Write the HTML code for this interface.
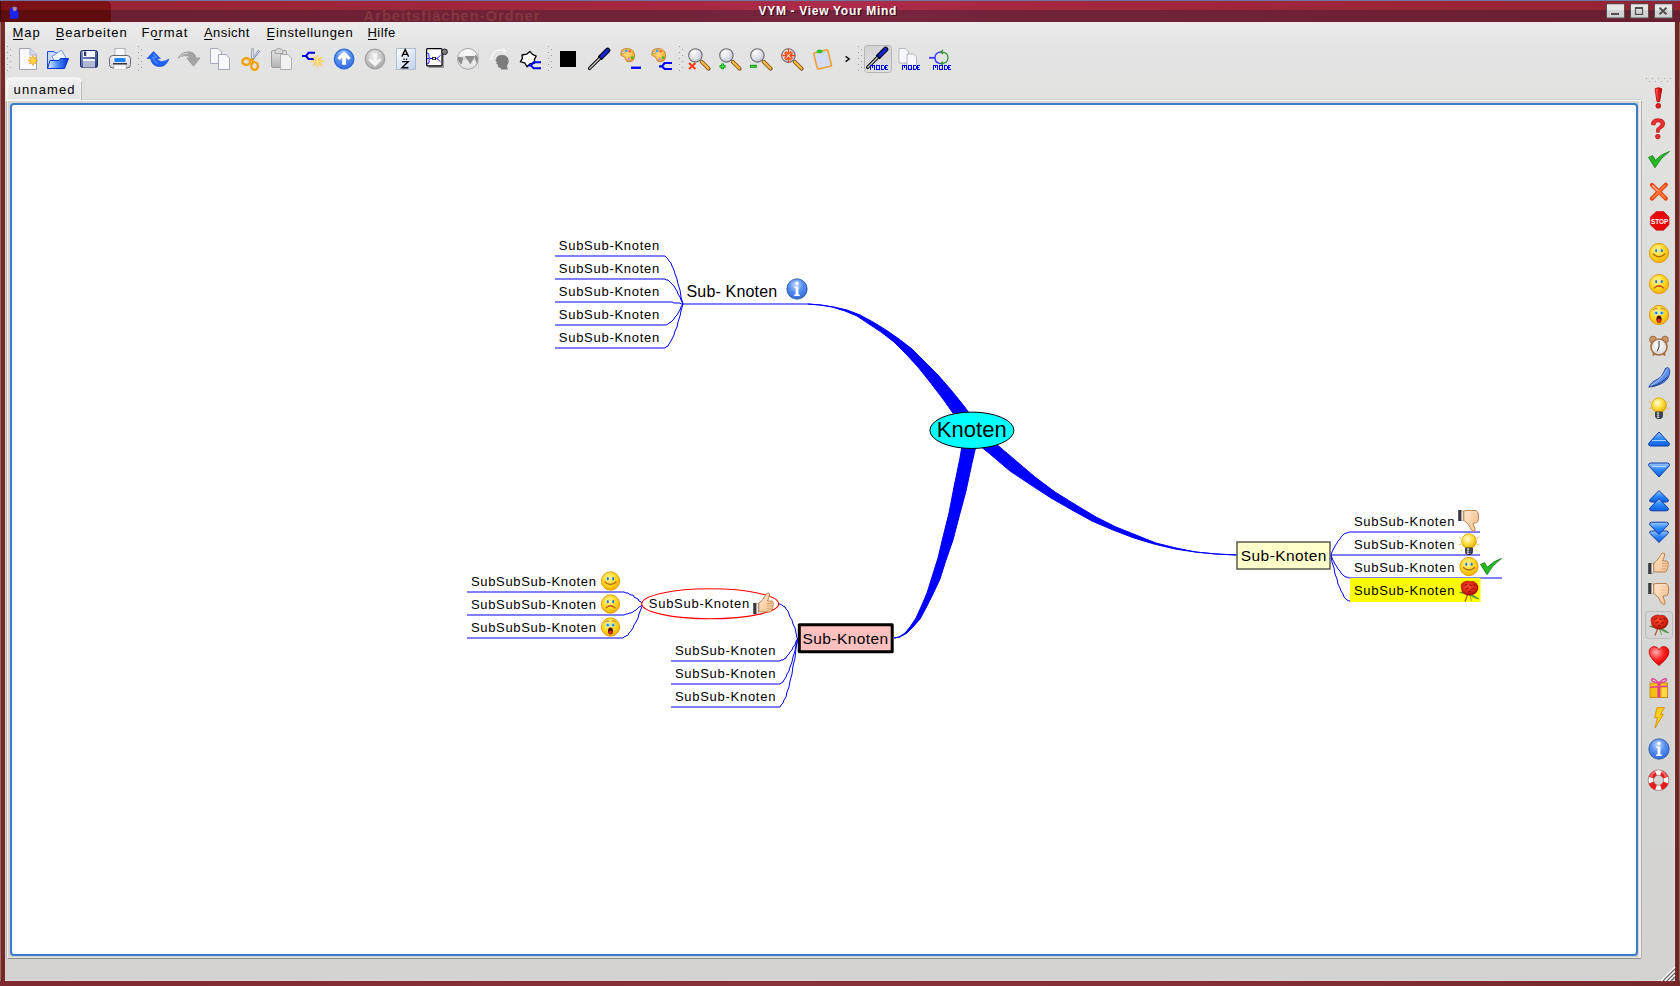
<!DOCTYPE html>
<html><head><meta charset="utf-8"><style>
html,body{margin:0;padding:0}
body{width:1680px;height:986px;overflow:hidden;background:#722828}
svg{position:absolute;left:0;top:0;font-family:"Liberation Sans",sans-serif}
text{font-family:"Liberation Sans",sans-serif;white-space:pre}
</style></head><body>
<svg width="1680" height="986" viewBox="0 0 1680 986">
<defs>
<linearGradient id="tbTop" x1="0" x2="1" y1="0" y2="0">
 <stop offset="0" stop-color="#952232"/><stop offset="0.4" stop-color="#a4283f"/><stop offset="0.5" stop-color="#ae2c4a"/><stop offset="0.6" stop-color="#a4283f"/><stop offset="1" stop-color="#952232"/>
</linearGradient>
<linearGradient id="tbBot" x1="0" x2="1" y1="0" y2="0">
 <stop offset="0" stop-color="#6a1f30"/><stop offset="0.4" stop-color="#722338"/><stop offset="0.5" stop-color="#7a2540"/><stop offset="0.6" stop-color="#722338"/><stop offset="1" stop-color="#6a1f30"/>
</linearGradient>
<linearGradient id="winbg" x1="0" x2="0" y1="0" y2="1">
 <stop offset="0" stop-color="#ececec"/><stop offset="0.025" stop-color="#e4e4e4"/><stop offset="0.08" stop-color="#e2e2e1"/><stop offset="0.3" stop-color="#dcdcdb"/><stop offset="0.7" stop-color="#d6d6d5"/><stop offset="1" stop-color="#d3d2d1"/>
</linearGradient>
<linearGradient id="tabg" x1="0" x2="0" y1="0" y2="1">
 <stop offset="0" stop-color="#f2f2f2"/><stop offset="1" stop-color="#e2e2e2"/>
</linearGradient>
<linearGradient id="btng" x1="0" x2="0" y1="0" y2="1">
 <stop offset="0" stop-color="#f0f0f0"/><stop offset="1" stop-color="#c8c8c8"/>
</linearGradient>
</defs>
<rect x="0" y="0" width="1680" height="986" fill="#722828"/>
<rect x="0" y="22" width="1" height="964" fill="#957068"/>
<rect x="1" y="22" width="4" height="959" fill="#782626"/>
<rect x="1675" y="22" width="4" height="959" fill="#722422"/>
<rect x="1679" y="22" width="1" height="964" fill="#886860"/>
<linearGradient id="botG" x1="0" x2="1" y1="0" y2="0"><stop offset="0" stop-color="#7e2a30"/><stop offset="0.45" stop-color="#8a323c"/><stop offset="0.7" stop-color="#86303a"/><stop offset="1" stop-color="#762828"/></linearGradient>
<rect x="0" y="981" width="1680" height="5" fill="url(#botG)"/>
<rect x="0" y="981" width="1680" height="1" fill="#80262e"/>
<rect x="5" y="980" width="1670" height="1" fill="#dcdedb"/>
<rect x="0" y="0" width="1680" height="1" fill="#6c78a4"/>
<rect x="0" y="1" width="1680" height="9" fill="url(#tbTop)"/>
<rect x="0" y="10" width="1680" height="12" fill="url(#tbBot)"/>
<path d="M0,1 H105 Q111,1 111,7 V22 H0 Z" fill="#5e0c0e"/>
<path d="M0,1 H105 Q111,1 111,7 V10 H0 Z" fill="#7c1216"/>
<rect x="0" y="1" width="1" height="21" fill="#2a0606" opacity="0.7"/>
<text x="363.6" y="21" font-size="14.5" letter-spacing="1.1" fill="#84363f" font-weight="bold" >Arbeitsflächen-Ordner</text>
<text x="758.5" y="15" font-size="12" letter-spacing="0.695" fill="#2a0008" font-weight="bold" transform="translate(1,1)" opacity="0.8">VYM - View Your Mind</text>
<text x="758.5" y="15" font-size="12" letter-spacing="0.695" fill="#ffffff" font-weight="bold" >VYM - View Your Mind</text>
<path d="M10,8.5 Q12,6.5 15,7 Q18,8 17.5,11 Q19,13 18.5,16 Q19,18.5 16.5,18.8 H11 Q9,18 10.5,15.5 Q8.5,13 10,11 Z" fill="#1a22ff"/><circle cx="14.8" cy="9" r="2" fill="#c09080"/><path d="M12,8 Q14,6 17,8" stroke="#8090c0" stroke-width="0.8" fill="none"/>
<rect x="1606.5" y="4" width="18" height="14" fill="#d2d2d2" stroke="#4e544e" stroke-width="1"/>
<rect x="1607" y="4.5" width="17" height="5.8" fill="#e6e6e6"/>
<rect x="1630.5" y="4" width="18" height="14" fill="#d2d2d2" stroke="#4e544e" stroke-width="1"/>
<rect x="1631" y="4.5" width="17" height="5.8" fill="#e6e6e6"/>
<rect x="1654.5" y="4" width="18" height="14" fill="#d2d2d2" stroke="#4e544e" stroke-width="1"/>
<rect x="1655" y="4.5" width="17" height="5.8" fill="#e6e6e6"/>
<rect x="1611" y="13" width="8" height="2" fill="#505050"/>
<rect x="1635.5" y="7.6" width="7" height="6.8" fill="none" stroke="#505050" stroke-width="1.2"/><rect x="1635" y="7" width="8" height="2" fill="#505050"/>
<path d="M1659.5,7.8 L1666.5,14.2 M1666.5,7.8 L1659.5,14.2" stroke="#505050" stroke-width="2"/>
<rect x="5" y="22" width="1670" height="958" fill="url(#winbg)"/><rect x="1674" y="22" width="1" height="958" fill="#dcdcdc"/>
<text x="12.5" y="37" font-size="13" letter-spacing="1.0" fill="#000" font-weight="normal" >Map</text>
<text x="55.7" y="37" font-size="13" letter-spacing="0.9" fill="#000" font-weight="normal" >Bearbeiten</text>
<text x="141.5" y="37" font-size="13" letter-spacing="0.92" fill="#000" font-weight="normal" >Format</text>
<text x="204.0" y="37" font-size="13" letter-spacing="0.45" fill="#000" font-weight="normal" >Ansicht</text>
<text x="266.59999999999997" y="37" font-size="13" letter-spacing="0.667" fill="#000" font-weight="normal" >Einstellungen</text>
<text x="367.5" y="37" font-size="13" letter-spacing="0.425" fill="#000" font-weight="normal" >Hilfe</text>
<rect x="13" y="39" width="10" height="1" fill="#000"/>
<rect x="56" y="39" width="8" height="1" fill="#000"/>
<rect x="154" y="39" width="6" height="1" fill="#000"/>
<rect x="204" y="39" width="8" height="1" fill="#000"/>
<rect x="267" y="39" width="7" height="1" fill="#000"/>
<rect x="368" y="39" width="9" height="1" fill="#000"/>
<rect x="7" y="46" width="1" height="1" fill="#9c9c9c"/>
<rect x="10" y="49" width="1" height="1" fill="#9c9c9c"/>
<rect x="7" y="52" width="1" height="1" fill="#9c9c9c"/>
<rect x="10" y="55" width="1" height="1" fill="#9c9c9c"/>
<rect x="7" y="58" width="1" height="1" fill="#9c9c9c"/>
<rect x="10" y="61" width="1" height="1" fill="#9c9c9c"/>
<rect x="7" y="64" width="1" height="1" fill="#9c9c9c"/>
<rect x="10" y="67" width="1" height="1" fill="#9c9c9c"/>
<rect x="7" y="70" width="1" height="1" fill="#9c9c9c"/>
<rect x="138" y="46" width="1" height="1" fill="#9c9c9c"/>
<rect x="141" y="49" width="1" height="1" fill="#9c9c9c"/>
<rect x="138" y="52" width="1" height="1" fill="#9c9c9c"/>
<rect x="141" y="55" width="1" height="1" fill="#9c9c9c"/>
<rect x="138" y="58" width="1" height="1" fill="#9c9c9c"/>
<rect x="141" y="61" width="1" height="1" fill="#9c9c9c"/>
<rect x="138" y="64" width="1" height="1" fill="#9c9c9c"/>
<rect x="141" y="67" width="1" height="1" fill="#9c9c9c"/>
<rect x="138" y="70" width="1" height="1" fill="#9c9c9c"/>
<rect x="548" y="46" width="1" height="1" fill="#9c9c9c"/>
<rect x="551" y="49" width="1" height="1" fill="#9c9c9c"/>
<rect x="548" y="52" width="1" height="1" fill="#9c9c9c"/>
<rect x="551" y="55" width="1" height="1" fill="#9c9c9c"/>
<rect x="548" y="58" width="1" height="1" fill="#9c9c9c"/>
<rect x="551" y="61" width="1" height="1" fill="#9c9c9c"/>
<rect x="548" y="64" width="1" height="1" fill="#9c9c9c"/>
<rect x="551" y="67" width="1" height="1" fill="#9c9c9c"/>
<rect x="548" y="70" width="1" height="1" fill="#9c9c9c"/>
<rect x="679" y="46" width="1" height="1" fill="#9c9c9c"/>
<rect x="682" y="49" width="1" height="1" fill="#9c9c9c"/>
<rect x="679" y="52" width="1" height="1" fill="#9c9c9c"/>
<rect x="682" y="55" width="1" height="1" fill="#9c9c9c"/>
<rect x="679" y="58" width="1" height="1" fill="#9c9c9c"/>
<rect x="682" y="61" width="1" height="1" fill="#9c9c9c"/>
<rect x="679" y="64" width="1" height="1" fill="#9c9c9c"/>
<rect x="682" y="67" width="1" height="1" fill="#9c9c9c"/>
<rect x="679" y="70" width="1" height="1" fill="#9c9c9c"/>
<rect x="858" y="46" width="1" height="1" fill="#9c9c9c"/>
<rect x="861" y="49" width="1" height="1" fill="#9c9c9c"/>
<rect x="858" y="52" width="1" height="1" fill="#9c9c9c"/>
<rect x="861" y="55" width="1" height="1" fill="#9c9c9c"/>
<rect x="858" y="58" width="1" height="1" fill="#9c9c9c"/>
<rect x="861" y="61" width="1" height="1" fill="#9c9c9c"/>
<rect x="858" y="64" width="1" height="1" fill="#9c9c9c"/>
<rect x="861" y="67" width="1" height="1" fill="#9c9c9c"/>
<rect x="858" y="70" width="1" height="1" fill="#9c9c9c"/>
<rect x="1646" y="78" width="1" height="1" fill="#a4a4a4"/>
<rect x="1649" y="81" width="1" height="1" fill="#a4a4a4"/>
<rect x="1652" y="78" width="1" height="1" fill="#a4a4a4"/>
<rect x="1655" y="81" width="1" height="1" fill="#a4a4a4"/>
<rect x="1658" y="78" width="1" height="1" fill="#a4a4a4"/>
<rect x="1661" y="81" width="1" height="1" fill="#a4a4a4"/>
<rect x="1664" y="78" width="1" height="1" fill="#a4a4a4"/>
<rect x="1667" y="81" width="1" height="1" fill="#a4a4a4"/>
<rect x="1670" y="78" width="1" height="1" fill="#a4a4a4"/>
<rect x="5" y="99" width="1636" height="1" fill="#cfcfcf"/>
<rect x="5" y="100" width="1636" height="1" fill="#fafafa"/>
<path d="M7,100 V82 Q7,78 11,78 H77 Q81,78 81,82 V100 Z" fill="url(#tabg)" stroke="#fcfcfc" stroke-width="1"/>
<path d="M81.5,82 V100" stroke="#b8b8b8" stroke-width="1"/>
<text x="13.6" y="94" font-size="13" letter-spacing="1.13" fill="#000" font-weight="normal" >unnamed</text>
<rect x="5" y="101" width="1" height="859" fill="#d0d4d4"/>
<rect x="6" y="101" width="1" height="858" fill="#b0b0b0"/>
<rect x="7" y="101" width="1" height="857" fill="#f2f2f0"/>
<rect x="8" y="101" width="1633" height="857" fill="#d8d4d0"/>
<rect x="8" y="957" width="1633" height="1" fill="#e2e0de"/>
<rect x="8" y="958" width="1633" height="1" fill="#8e8e8e"/>
<rect x="1639" y="101" width="2" height="857" fill="#eeeeec"/>
<rect x="1641" y="101" width="1" height="857" fill="#b0b0b0"/>
<rect x="11" y="104" width="1626" height="851" rx="3" fill="#ffffff" stroke="#3b7bcc" stroke-width="2"/>
<path d="M1661,981 L1675,967" stroke="#ffffff" stroke-width="1.2"/>
<path d="M1663,981 L1675,969" stroke="#6a6a6a" stroke-width="1.2"/>
<path d="M1665,981 L1675,971" stroke="#ffffff" stroke-width="1.2"/>
<path d="M1667,981 L1675,973" stroke="#6a6a6a" stroke-width="1.2"/>
<path d="M1669,981 L1675,975" stroke="#ffffff" stroke-width="1.2"/>
<path d="M1671,981 L1675,977" stroke="#6a6a6a" stroke-width="1.2"/>
<polygon fill="#0000ff" stroke="#0000ff" stroke-width="1" stroke-linejoin="round" points="808,304 820,305 832,307 845,311 857,316 869,324 881,332 894,342 906,354 918,367 930,382 943,399 955,416 967,436 977,424 964,406 951,390 938,375 925,362 912,349 899,339 886,330 873,322 860,315 847,310 834,307 821,305 808,304"/>
<polygon fill="#0000ff" stroke="#0000ff" stroke-width="1" stroke-linejoin="round" points="894,638 900,637 907,633 913,627 920,619 926,608 933,594 940,579 946,560 953,540 959,517 966,491 972,463 979,433 965,427 960,458 954,487 949,513 943,537 938,558 932,577 927,593 921,607 916,618 910,627 905,633 899,637 894,638"/>
<polygon fill="#0000ff" stroke="#0000ff" stroke-width="1" stroke-linejoin="round" points="1237,555 1216,554 1195,552 1175,549 1154,544 1134,538 1113,530 1092,521 1072,510 1051,498 1031,485 1010,471 990,454 969,437 975,423 995,443 1015,460 1035,477 1055,492 1076,505 1096,517 1116,527 1136,535 1156,543 1176,548 1196,552 1216,554 1237,555"/>
<line x1="555" y1="256" x2="663" y2="256" stroke="#0000ff" stroke-width="1"/>
<polyline fill="none" stroke="#0000ff" stroke-width="1.0" points="663,256 665,256 666,257 668,259 669,261 671,263 672,266 674,270 675,274 677,279 678,284 680,290 681,297 683,304"/>
<line x1="555" y1="279" x2="663" y2="279" stroke="#0000ff" stroke-width="1"/>
<polyline fill="none" stroke="#0000ff" stroke-width="1.0" points="663,279 665,279 666,280 668,280 669,281 671,283 672,284 674,286 675,288 677,291 678,294 680,297 681,300 683,304"/>
<line x1="555" y1="302" x2="663" y2="302" stroke="#0000ff" stroke-width="1"/>
<polyline fill="none" stroke="#0000ff" stroke-width="1.0" points="663,302 665,302 666,302 668,302 669,302 671,302 672,302 674,303 675,303 677,303 678,303 680,303 681,304 683,304"/>
<line x1="555" y1="325" x2="663" y2="325" stroke="#0000ff" stroke-width="1"/>
<polyline fill="none" stroke="#0000ff" stroke-width="1.0" points="663,325 665,325 666,325 668,324 669,323 671,322 672,321 674,319 675,317 677,315 678,313 680,310 681,307 683,304"/>
<line x1="555" y1="348" x2="663" y2="348" stroke="#0000ff" stroke-width="1"/>
<polyline fill="none" stroke="#0000ff" stroke-width="1.0" points="663,348 665,348 666,347 668,346 669,344 671,341 672,339 674,335 675,331 677,327 678,322 680,316 681,311 683,304"/>
<line x1="683" y1="304" x2="808" y2="304" stroke="#0000ff" stroke-width="1"/>
<line x1="671" y1="661" x2="778" y2="661" stroke="#0000ff" stroke-width="1"/>
<polyline fill="none" stroke="#0000ff" stroke-width="1.0" points="778,661 780,661 781,660 783,660 784,659 786,658 787,656 789,654 790,652 792,650 793,647 795,645 796,641 798,638"/>
<line x1="671" y1="684" x2="778" y2="684" stroke="#0000ff" stroke-width="1"/>
<polyline fill="none" stroke="#0000ff" stroke-width="1.0" points="778,684 780,684 781,683 783,682 784,680 786,677 787,674 789,671 790,667 792,662 793,657 795,651 796,645 798,638"/>
<line x1="671" y1="707" x2="778" y2="707" stroke="#0000ff" stroke-width="1"/>
<polyline fill="none" stroke="#0000ff" stroke-width="1.0" points="778,707 780,707 781,705 783,703 784,700 786,697 787,692 789,687 790,681 792,674 793,666 795,658 796,648 798,638"/>
<polyline fill="none" stroke="#0000ff" stroke-width="1.0" points="779,604 780,604 782,605 783,606 785,607 786,609 788,611 789,614 790,617 792,620 793,624 795,628 796,633 797,638"/>
<line x1="467" y1="592" x2="621" y2="592" stroke="#0000ff" stroke-width="1"/>
<polyline fill="none" stroke="#0000ff" stroke-width="1.0" points="621,592 623,592 624,592 626,593 628,593 629,594 631,595 633,595 634,597 636,598 638,599 639,601 641,602 643,604"/>
<line x1="467" y1="615" x2="621" y2="615" stroke="#0000ff" stroke-width="1"/>
<polyline fill="none" stroke="#0000ff" stroke-width="1.0" points="621,615 623,615 624,615 626,614 628,614 629,613 631,613 633,612 634,611 636,610 638,608 639,607 641,606 643,604"/>
<line x1="467" y1="638" x2="621" y2="638" stroke="#0000ff" stroke-width="1"/>
<polyline fill="none" stroke="#0000ff" stroke-width="1.0" points="621,638 623,638 624,637 626,636 628,635 629,633 631,631 633,628 634,625 636,622 638,618 639,614 641,609 643,604"/>
<polyline fill="none" stroke="#0000ff" stroke-width="1.0" points="1350,532 1349,532 1347,533 1346,533 1344,534 1343,535 1341,537 1340,539 1338,541 1337,543 1335,546 1334,548 1332,552 1331,555"/>
<polyline fill="none" stroke="#0000ff" stroke-width="1.0" points="1350,555 1349,555 1347,555 1346,555 1344,555 1343,555 1341,555 1340,555 1338,555 1337,555 1335,555 1334,555 1332,555 1331,555"/>
<polyline fill="none" stroke="#0000ff" stroke-width="1.0" points="1350,578 1349,578 1347,577 1346,577 1344,576 1343,575 1341,573 1340,571 1338,569 1337,567 1335,564 1334,562 1332,558 1331,555"/>
<polyline fill="none" stroke="#0000ff" stroke-width="1.0" points="1350,601 1349,601 1347,600 1346,599 1344,597 1343,594 1341,591 1340,588 1338,584 1337,579 1335,574 1334,568 1332,562 1331,555"/>
<line x1="1350" y1="532" x2="1480" y2="532" stroke="#0000ff" stroke-width="1"/>
<line x1="1350" y1="555" x2="1480" y2="555" stroke="#0000ff" stroke-width="1"/>
<line x1="1350" y1="578" x2="1502" y2="578" stroke="#0000ff" stroke-width="1"/>
<rect x="1350" y="578" width="130.5" height="24" fill="#ffff00"/>
<ellipse cx="971.9" cy="430.3" rx="42" ry="18.2" fill="#00ffff" stroke="#000" stroke-width="1"/>
<text x="936.8" y="437" font-size="22" letter-spacing="0.06" fill="#000" font-weight="normal" >Knoten</text>
<text x="686.5" y="297" font-size="16" letter-spacing="0.175" fill="#000" font-weight="normal" >Sub- Knoten</text>
<text x="558.8" y="250" font-size="13" letter-spacing="0.725" fill="#000" font-weight="normal" >SubSub-Knoten</text>
<text x="558.8" y="273" font-size="13" letter-spacing="0.725" fill="#000" font-weight="normal" >SubSub-Knoten</text>
<text x="558.8" y="296" font-size="13" letter-spacing="0.725" fill="#000" font-weight="normal" >SubSub-Knoten</text>
<text x="558.8" y="319" font-size="13" letter-spacing="0.725" fill="#000" font-weight="normal" >SubSub-Knoten</text>
<text x="558.8" y="342" font-size="13" letter-spacing="0.725" fill="#000" font-weight="normal" >SubSub-Knoten</text>
<rect x="799.3" y="624.8" width="92.9" height="27" fill="#ffc0c0" stroke="#000" stroke-width="3" stroke-linejoin="round"/>
<text x="802.5" y="644" font-size="15.5" letter-spacing="0.42" fill="#000" font-weight="normal" >Sub-Knoten</text>
<ellipse cx="710.2" cy="603.8" rx="68.5" ry="15" fill="#fff" stroke="#ff0000" stroke-width="1.1"/>
<text x="648.8" y="608" font-size="13" letter-spacing="0.725" fill="#000" font-weight="normal" >SubSub-Knoten</text>
<text x="470.9" y="586" font-size="13" letter-spacing="0.68" fill="#000" font-weight="normal" >SubSubSub-Knoten</text>
<text x="470.9" y="609" font-size="13" letter-spacing="0.68" fill="#000" font-weight="normal" >SubSubSub-Knoten</text>
<text x="470.9" y="632" font-size="13" letter-spacing="0.68" fill="#000" font-weight="normal" >SubSubSub-Knoten</text>
<text x="674.9" y="655" font-size="13" letter-spacing="0.725" fill="#000" font-weight="normal" >SubSub-Knoten</text>
<text x="674.9" y="678" font-size="13" letter-spacing="0.725" fill="#000" font-weight="normal" >SubSub-Knoten</text>
<text x="674.9" y="701" font-size="13" letter-spacing="0.725" fill="#000" font-weight="normal" >SubSub-Knoten</text>
<rect x="1237" y="542" width="93" height="27" fill="#ffffcc" stroke="#5a5a50" stroke-width="1.5"/>
<text x="1240.8" y="561" font-size="15.5" letter-spacing="0.42" fill="#000" font-weight="normal" >Sub-Knoten</text>
<text x="1353.9" y="526" font-size="13" letter-spacing="0.725" fill="#000" font-weight="normal" >SubSub-Knoten</text>
<text x="1353.9" y="549" font-size="13" letter-spacing="0.725" fill="#000" font-weight="normal" >SubSub-Knoten</text>
<text x="1353.9" y="572" font-size="13" letter-spacing="0.725" fill="#000" font-weight="normal" >SubSub-Knoten</text>
<text x="1353.9" y="595" font-size="13" letter-spacing="0.725" fill="#000" font-weight="normal" >SubSub-Knoten</text>
<defs>
<linearGradient id="openG" x1="0" x2="1" y1="0" y2="0"><stop offset="0" stop-color="#e8f0ff"/><stop offset="0.5" stop-color="#4a8af8"/><stop offset="1" stop-color="#0030d8"/></linearGradient>
<linearGradient id="pasteG" x1="0" x2="0" y1="0" y2="1"><stop offset="0" stop-color="#e4e4e4"/><stop offset="1" stop-color="#b4b4b4"/></linearGradient>
<radialGradient id="blueBall" cx="0.45" cy="0.3" r="0.75"><stop offset="0" stop-color="#c8dcff"/><stop offset="0.45" stop-color="#5a90f0"/><stop offset="1" stop-color="#2a66d8"/></radialGradient>
<radialGradient id="grayBall" cx="0.45" cy="0.3" r="0.75"><stop offset="0" stop-color="#f4f4f4"/><stop offset="0.5" stop-color="#c4c4c4"/><stop offset="1" stop-color="#a4a4a4"/></radialGradient>
<linearGradient id="azG" x1="0" x2="1" y1="0" y2="1"><stop offset="0" stop-color="#ffffff"/><stop offset="1" stop-color="#c0d0ec"/></linearGradient>
<linearGradient id="globeG" x1="0" x2="0" y1="0" y2="1"><stop offset="0" stop-color="#fafafa"/><stop offset="0.35" stop-color="#f4f4f4"/><stop offset="0.45" stop-color="#c8c8c8"/><stop offset="0.6" stop-color="#ececec"/><stop offset="1" stop-color="#e0e0e0"/></linearGradient>
<radialGradient id="palG" cx="0.45" cy="0.4" r="0.7"><stop offset="0" stop-color="#ffe080"/><stop offset="0.6" stop-color="#f8b840"/><stop offset="1" stop-color="#d88820"/></radialGradient>
<radialGradient id="lensG" cx="0.35" cy="0.3" r="0.8"><stop offset="0" stop-color="#ffffff"/><stop offset="0.6" stop-color="#dcdce4"/><stop offset="1" stop-color="#b4b8c8"/></radialGradient>
<linearGradient id="printG" x1="0" x2="0" y1="0" y2="1"><stop offset="0" stop-color="#f8f8fa"/><stop offset="1" stop-color="#d0d0d6"/></linearGradient>
<linearGradient id="saveG" x1="0" x2="1" y1="0" y2="1"><stop offset="0" stop-color="#8a9ad0"/><stop offset="1" stop-color="#2a3878"/></linearGradient>
<linearGradient id="btnP" x1="0" x2="0" y1="0" y2="1"><stop offset="0" stop-color="#d4d4d4"/><stop offset="1" stop-color="#e0e0e0"/></linearGradient>
</defs>
<g transform="translate(16,48)"><path d="M3.5,0.5 H14 L20.5,7 V21.5 H3.5 Z" fill="#fafaff" stroke="#9ea2b4"/><path d="M14,0.5 V7 H20.5" fill="#d8dcf4" stroke="#9ea2b4" stroke-width="0.8"/><polygon points="17.00,7.50 17.99,10.10 20.54,8.96 19.40,11.51 22.00,12.50 19.40,13.49 20.54,16.04 17.99,14.90 17.00,17.50 16.01,14.90 13.46,16.04 14.60,13.49 12.00,12.50 14.60,11.51 13.46,8.96 16.01,10.10" fill="#ffd840" stroke="#f0a030" stroke-width="0.8" stroke-linejoin="round"/></g>
<g transform="translate(47,48)"><path d="M0.5,3.5 H7 L8.5,5 H12 V20.5 H0.5 Z" fill="#c8d8fa" stroke="#1a4ee0"/><path d="M5,8.5 L14.5,2 L19,10 L9,15.5 Z" fill="#f4f6ff" stroke="#5a80e0" stroke-width="0.8"/><path d="M3,12.5 H12 L13.5,10.5 H21.5 L17.5,20.5 H0.5 Z" fill="url(#openG)" stroke="#0030d8"/></g>
<g transform="translate(78,48)"><rect x="2.5" y="2.5" width="17" height="17" rx="2" fill="url(#saveG)" stroke="#1a2468"/><rect x="5" y="3" width="12" height="6" fill="#f4f4fc"/><rect x="6" y="3.5" width="2.2" height="4.5" fill="#2a3878"/><rect x="5" y="11" width="12" height="8.5" fill="#b0b8d4"/><rect x="5" y="11" width="12" height="2" fill="#eceef8"/></g>
<g transform="translate(109,48)"><rect x="6" y="0.5" width="10" height="10" fill="#f8f8ff" stroke="#a8a8b0" stroke-width="0.8"/><rect x="0.5" y="7.5" width="21" height="12.5" rx="3.5" fill="url(#printG)" stroke="#6a6a72"/><rect x="5.5" y="10" width="11" height="4" fill="#1e84f4"/><rect x="4" y="15" width="14" height="1.6" fill="#3a3a44"/><rect x="5" y="17" width="12" height="4.5" fill="#fbfbfb" stroke="#b8b8b8" stroke-width="0.5"/></g>
<g transform="translate(147,48)"><path d="M6.5,3.5 L13.5,10.5 H10.2 Q12.5,16 22,11.2 Q18.5,19.5 11,18.5 Q4.8,17.5 3.6,10.5 H0 Z" fill="#1e62f6" stroke="#0a44d8" stroke-width="0.6" stroke-linejoin="round"/><path d="M6.5,6 L9.5,9.4 H6 Q7,13.5 10.5,15.5" fill="none" stroke="#6a9aff" stroke-width="1.4" opacity="0.7"/></g>
<g transform="translate(178,48)"><path d="M0,10.2 Q3.5,3.8 11,3.8 Q16.5,4 18.2,10 H22 L15.5,18.2 L8.8,10 H12.6 Q10.5,7.2 6.5,7.6 Q2.8,8 0,10.2 Z" fill="#a4a4a4" stroke="#8a8a8a" stroke-width="0.6" stroke-linejoin="round"/><path d="M2,8.5 Q5,5 10,5" fill="none" stroke="#e8e8e8" stroke-width="0.8"/></g>
<g transform="translate(209,48)"><path d="M1.5,0.5 H9 L12.5,4 V15.5 H1.5 Z" fill="#f8f8fc" stroke="#a4a8bc"/><path d="M9.5,6.5 H17 L20.5,10 V21.5 H9.5 Z" fill="#f8f8fc" stroke="#a4a8bc"/></g>
<g transform="translate(240,48)"><path d="M12.6,0.5 L12.2,11.5 M19.2,2.6 L12.2,11.5" stroke="#7880a4" stroke-width="2.2"/><path d="M12.7,1.2 L12.4,10.2 M18.6,3.2 L12.8,10.3" stroke="#ffffff" stroke-width="0.8"/><ellipse cx="6.3" cy="13.6" rx="3.9" ry="3.3" fill="none" stroke="#f0a000" stroke-width="2.4"/><ellipse cx="14.6" cy="18" rx="3.3" ry="3.9" fill="none" stroke="#f0a000" stroke-width="2.4"/><path d="M9.6,12.4 L12.3,11.6 L13.2,14.4" fill="none" stroke="#f0a000" stroke-width="2"/></g>
<g transform="translate(271,48)"><rect x="0.5" y="2.5" width="15" height="17" rx="1.5" fill="url(#pasteG)" stroke="#9c9c9c"/><path d="M4,5.5 Q4,0.5 8,0.5 Q12,0.5 12,5.5 Z" fill="#dadada" stroke="#a0a0a0"/><path d="M9.5,6.5 H17 L20.5,10 V21.5 H9.5 Z" fill="#f2f2f2" stroke="#b0b0b0"/></g>
<g transform="translate(302,48)"><path d="M0,8 H4 L6.6,4.8 H13 M4,8 L6.6,11 H12" fill="none" stroke="#0000e0" stroke-width="2"/><path d="M21.50,13.40 L9.50,13.40" stroke="#f8c040" stroke-width="1.8"/><path d="M19.74,17.64 L11.26,9.16" stroke="#f8c040" stroke-width="1.8"/><path d="M15.50,19.40 L15.50,7.40" stroke="#f8c040" stroke-width="1.8"/><path d="M11.26,17.64 L19.74,9.16" stroke="#f8c040" stroke-width="1.8"/><path d="M21.00,13.40 L10.00,13.40" stroke="#fff0a0" stroke-width="0.7"/><path d="M19.39,17.29 L11.61,9.51" stroke="#fff0a0" stroke-width="0.7"/><path d="M15.50,18.90 L15.50,7.90" stroke="#fff0a0" stroke-width="0.7"/><path d="M11.61,17.29 L19.39,9.51" stroke="#fff0a0" stroke-width="0.7"/></g>
<g transform="translate(333,48)"><circle cx="11.1" cy="11" r="9.8" fill="url(#blueBall)" stroke="#2a68d8" stroke-width="1.2"/><path d="M11.1,3.2 L17.8,10 L15.6,12 L13,9.6 V16.8 H9.2 V9.6 L6.6,12 L4.4,10 Z" fill="#ffffff"/></g>
<g transform="translate(364,48)"><circle cx="11" cy="11" r="9.8" fill="url(#grayBall)" stroke="#a0a0a0" stroke-width="1.2"/><path d="M11,18.8 L17.7,12 L15.5,10 L12.9,12.4 V5.2 H9.1 V12.4 L6.5,10 L4.3,12 Z" fill="#f4f4f4"/></g>
<g transform="translate(395,48)"><rect x="1.5" y="0.5" width="19" height="21" fill="url(#azG)" stroke="#b0bcd0"/><path d="M6.8,8.6 L10.2,1.6 L13.6,8.6 M8,6.4 H12.4" fill="none" stroke="#000" stroke-width="1.3"/><rect x="8.3" y="10.6" width="1.3" height="1.3" fill="#000"/><rect x="10.9" y="10.6" width="1.3" height="1.3" fill="#000"/><path d="M7,13.6 H13.2 L7,19.8 H13.4" fill="none" stroke="#000" stroke-width="1.4"/></g>
<g transform="translate(426,48)"><rect x="2.4" y="2.4" width="15.6" height="17.6" fill="#9a9a9a"/><rect x="0.6" y="0.6" width="15.4" height="17.2" rx="1" fill="#fff" stroke="#000" stroke-width="1.2"/><circle cx="18.6" cy="3.8" r="2.8" fill="#808080" stroke="#000" stroke-width="0.8"/><path d="M1,5 Q3,5 3,7 V8.8 Q3,10.5 5,10.5 M1,16 Q3,16 3,14 V12.2 Q3,10.5 5,10.5 H6.4 M9.6,10.5 H11 L14.6,7.2 M11,10.5 L14.6,13.8 M1,10.5 H3" fill="none" stroke="#0000ff" stroke-width="0.9"/><rect x="6.4" y="9.5" width="3.2" height="2" fill="#fff" stroke="#000" stroke-width="0.8"/></g>
<g transform="translate(457,48)"><clipPath id="globeClip"><circle cx="10.9" cy="10.9" r="10.4"/></clipPath><circle cx="10.9" cy="10.9" r="10.4" fill="url(#globeG)"/><g clip-path="url(#globeClip)"><path d="M0.8,9.4 Q3.5,8.2 6.2,10 L4.6,16.6 Q1,14 0.8,9.4 Z" fill="#8c8c8c"/><path d="M7.8,8 H18.2 L13.4,16.2 Z" fill="#8e8e8e"/><path d="M17.8,6.4 Q21.4,8 21.3,12 L20,16 L18.4,12 Z" fill="#8c8c8c"/></g><circle cx="10.9" cy="10.9" r="10.4" fill="none" stroke="#a4a4a4" stroke-width="1"/><rect x="21.2" y="0.4" width="0.7" height="21" fill="#cacaca"/></g>
<g transform="translate(488,48)"><path d="M8.6,9.2 Q10,7 14,7 Q19.6,7 20.6,12 Q21,15.5 19,17.5 L19.8,21.4 H13 L12.6,19.8 Q10.5,20 10,18.5 L9.8,16.6 L8.2,16 L9,14.6 L7.4,12.6 Q8.6,11 8.6,9.2 Z" fill="#7c7c7c"/><path d="M3.2,11.6 Q4,3 11,1.8 Q15,1.2 16.6,2.6" fill="none" stroke="#f6f6f6" stroke-width="1.8"/><path d="M15,0.6 L17.6,2.7 L15.4,5" fill="none" stroke="#f6f6f6" stroke-width="1.4"/></g>
<g transform="translate(519,48)"><path d="M3,7 L7.6,6.2 L10.8,3.4 L13.8,6.6 L17.2,8 L15.4,11.6 L15.6,15.2 L11.2,15.6 L8,18.8 L6,15.2 L1.4,13.6 L3.4,10.6 Z" fill="#fff" stroke="#000" stroke-width="1.3" stroke-linejoin="round"/><path d="M9.5,17.6 H12 L14.6,14.3 H22 M12,17.6 L14.6,20.2 H22" fill="none" stroke="#0000ff" stroke-width="2"/></g>
<rect x="560" y="51" width="16" height="16" fill="#000"/>
<g transform="translate(588,48)"><path d="M1.6,20.4 L13,9" stroke="#000" stroke-width="3.4" stroke-linecap="round"/><path d="M1.8,20.2 L13,9" stroke="#c4c4c4" stroke-width="1.5" stroke-linecap="round"/><path d="M10.6,7.6 L14.4,11.4" stroke="#000" stroke-width="2.2"/><path d="M13.6,8.4 L19.6,2.4" stroke="#000" stroke-width="5.4" stroke-linecap="round"/><path d="M13.6,8.4 L19.6,2.4" stroke="#1424c8" stroke-width="3.6" stroke-linecap="round"/></g>
<g transform="translate(619,48)"><path d="M2,5 Q2,0.5 8,0.5 Q15,0.5 15.6,7 Q16,13.6 10,13.8 Q7,14 6,10.2 Q5.2,8 3,8 Q1,8 2,5 Z" fill="url(#palG)" stroke="#c07020" stroke-width="0.7"/><ellipse cx="4" cy="4.6" rx="1.3" ry="1" fill="#fff" stroke="#906030" stroke-width="0.5"/><circle cx="7.2" cy="2.8" r="1.4" fill="#3aa0ff"/><circle cx="10.6" cy="3.2" r="1.2" fill="#ff5a50"/><circle cx="13.2" cy="9.6" r="1.4" fill="#30c030"/><circle cx="9.6" cy="11.2" r="1.2" fill="#b898ff"/><rect x="12" y="18.6" width="10" height="2.3" fill="#0000ff"/></g>
<g transform="translate(650,48)"><path d="M2,5 Q2,0.5 8,0.5 Q15,0.5 15.6,7 Q16,13.6 10,13.8 Q7,14 6,10.2 Q5.2,8 3,8 Q1,8 2,5 Z" fill="url(#palG)" stroke="#c07020" stroke-width="0.7"/><ellipse cx="4" cy="4.6" rx="1.3" ry="1" fill="#fff" stroke="#906030" stroke-width="0.5"/><circle cx="7.2" cy="2.8" r="1.4" fill="#3aa0ff"/><circle cx="10.6" cy="3.2" r="1.2" fill="#ff5a50"/><circle cx="13.2" cy="9.6" r="1.4" fill="#30c030"/><circle cx="9.6" cy="11.2" r="1.2" fill="#b898ff"/><path d="M9,18.4 H12 L14.6,15 H22 M12,18.4 L14.6,21 H22" stroke="#0000ff" stroke-width="2.2" fill="none"/></g>
<g transform="translate(688,48)"><circle cx="7.4" cy="7.4" r="6.7" fill="url(#lensG)" stroke="#6c6c74" stroke-width="1.1"/><path d="M13.8,13.8 L20.6,20.6" stroke="#7a4a10" stroke-width="4" stroke-linecap="round"/><path d="M13.8,13.8 L20.4,20.4" stroke="#f4b848" stroke-width="2.4" stroke-linecap="round"/><path d="M1,15 L7.4,21 M7.4,15 L1,21" stroke="#ff3a10" stroke-width="2"/></g>
<g transform="translate(719,48)"><circle cx="7.4" cy="7.4" r="6.7" fill="url(#lensG)" stroke="#6c6c74" stroke-width="1.1"/><path d="M13.8,13.8 L20.6,20.6" stroke="#7a4a10" stroke-width="4" stroke-linecap="round"/><path d="M13.8,13.8 L20.4,20.4" stroke="#f4b848" stroke-width="2.4" stroke-linecap="round"/><path d="M3.6,15.4 V21.2 M0.6,18.3 H6.6" stroke="#0a9a0a" stroke-width="2.8"/><path d="M3.6,16 V20.6 M1.2,18.3 H6" stroke="#50e050" stroke-width="1"/></g>
<g transform="translate(750,48)"><circle cx="7.4" cy="7.4" r="6.7" fill="url(#lensG)" stroke="#6c6c74" stroke-width="1.1"/><path d="M13.8,13.8 L20.6,20.6" stroke="#7a4a10" stroke-width="4" stroke-linecap="round"/><path d="M13.8,13.8 L20.4,20.4" stroke="#f4b848" stroke-width="2.4" stroke-linecap="round"/><rect x="0" y="16.8" width="6.8" height="3" fill="#0a9a0a"/><rect x="1" y="17.8" width="4.8" height="1" fill="#50e050"/></g>
<g transform="translate(781,48)"><circle cx="7.4" cy="7.6" r="6.8" fill="url(#lensG)" stroke="#6c6c74" stroke-width="1.1"/><path d="M13.8,13.8 L20.6,20.6" stroke="#7a4a10" stroke-width="4" stroke-linecap="round"/><path d="M13.8,13.8 L20.4,20.4" stroke="#f4b848" stroke-width="2.4" stroke-linecap="round"/><path d="M0.5,7.6 L6,7.6 M3.5,4.5 L6,7.6 L3.5,10.7 M14.5,7.6 L9,7.6 M11.5,4.5 L9,7.6 L11.5,10.7 M7.4,0.5 V6 M4.5,3.5 L7.4,6 L10.3,3.5 M7.4,15 V9.5 M4.5,12 L7.4,9.5 L10.3,12" fill="none" stroke="#ff4a10" stroke-width="1.5"/></g>
<g transform="translate(812,48)"><g transform="rotate(-14 11 11)"><rect x="3.2" y="3" width="14.6" height="16.8" rx="1.6" fill="#d4dcf8" stroke="#f0a030" stroke-width="1.6"/></g><ellipse cx="7.6" cy="3.4" rx="3" ry="1.8" fill="#30c030"/></g>
<path d="M845.6,56.4 L849.2,59 L845.6,61.6" fill="none" stroke="#000" stroke-width="1.3"/>
<rect x="864.5" y="45.5" width="27" height="27" rx="3" fill="url(#btnP)" stroke="#b4b4b4" stroke-width="1"/>
<g transform="translate(866,48)"><g transform="translate(0,-1)"><path d="M1.6,20.4 L13,9" stroke="#000" stroke-width="3.4" stroke-linecap="round"/><path d="M1.8,20.2 L13,9" stroke="#c4c4c4" stroke-width="1.5" stroke-linecap="round"/><path d="M10.6,7.6 L14.4,11.4" stroke="#000" stroke-width="2.2"/><path d="M13.6,8.4 L19.6,2.4" stroke="#000" stroke-width="5.4" stroke-linecap="round"/><path d="M13.6,8.4 L19.6,2.4" stroke="#1424c8" stroke-width="3.6" stroke-linecap="round"/></g><rect x="4" y="17" width="5" height="1" fill="#0000ff"/><rect x="4" y="17" width="1" height="5" fill="#0000ff"/><rect x="8" y="17" width="1" height="5" fill="#0000ff"/><rect x="6" y="17" width="1" height="3" fill="#0000ff"/><rect x="10" y="17" width="4" height="1" fill="#0000ff"/><rect x="10" y="21" width="4" height="1" fill="#0000ff"/><rect x="10" y="17" width="1" height="5" fill="#0000ff"/><rect x="13" y="17" width="1" height="5" fill="#0000ff"/><rect x="15" y="17" width="3" height="1" fill="#0000ff"/><rect x="15" y="21" width="3" height="1" fill="#0000ff"/><rect x="15" y="17" width="1" height="5" fill="#0000ff"/><rect x="18" y="18" width="1" height="3" fill="#0000ff"/><rect x="19" y="17" width="3" height="1" fill="#0000ff"/><rect x="19" y="19" width="2" height="1" fill="#0000ff"/><rect x="19" y="21" width="3" height="1" fill="#0000ff"/><rect x="19" y="17" width="1" height="5" fill="#0000ff"/></g>
<g transform="translate(897,48)"><path d="M2,0.5 H8.5 L11.5,3.5 V15 H2 Z" fill="#f8f8fc" stroke="#a4a8bc" stroke-width="0.8"/><path d="M10,6 H16.5 L19.5,9 V20 H10 Z" fill="#f8f8fc" stroke="#a4a8bc" stroke-width="0.8"/><rect x="5" y="17" width="5" height="1" fill="#0000ff"/><rect x="5" y="17" width="1" height="5" fill="#0000ff"/><rect x="9" y="17" width="1" height="5" fill="#0000ff"/><rect x="7" y="17" width="1" height="3" fill="#0000ff"/><rect x="11" y="17" width="4" height="1" fill="#0000ff"/><rect x="11" y="21" width="4" height="1" fill="#0000ff"/><rect x="11" y="17" width="1" height="5" fill="#0000ff"/><rect x="14" y="17" width="1" height="5" fill="#0000ff"/><rect x="16" y="17" width="3" height="1" fill="#0000ff"/><rect x="16" y="21" width="3" height="1" fill="#0000ff"/><rect x="16" y="17" width="1" height="5" fill="#0000ff"/><rect x="19" y="18" width="1" height="3" fill="#0000ff"/><rect x="20" y="17" width="3" height="1" fill="#0000ff"/><rect x="20" y="19" width="2" height="1" fill="#0000ff"/><rect x="20" y="21" width="3" height="1" fill="#0000ff"/><rect x="20" y="17" width="1" height="5" fill="#0000ff"/></g>
<g transform="translate(928,48)"><path d="M1,9.8 H7" stroke="#3a3aff" stroke-width="1.8"/><path d="M13.5,4 Q7,4 7,9.8 Q7,15.6 13.5,15.6" fill="none" stroke="#3a3aff" stroke-width="1.4"/><path d="M13.5,4 Q20,4.5 20,9.8 Q20,15.2 13.5,15.6" fill="none" stroke="#209020" stroke-width="1.2"/><path d="M15,2 L13,4 L15,6 M15,13.6 L13,15.6 L15,17.6" fill="none" stroke="#209020" stroke-width="1.2"/><rect x="5" y="17" width="5" height="1" fill="#0000ff"/><rect x="5" y="17" width="1" height="5" fill="#0000ff"/><rect x="9" y="17" width="1" height="5" fill="#0000ff"/><rect x="7" y="17" width="1" height="3" fill="#0000ff"/><rect x="11" y="17" width="4" height="1" fill="#0000ff"/><rect x="11" y="21" width="4" height="1" fill="#0000ff"/><rect x="11" y="17" width="1" height="5" fill="#0000ff"/><rect x="14" y="17" width="1" height="5" fill="#0000ff"/><rect x="16" y="17" width="3" height="1" fill="#0000ff"/><rect x="16" y="21" width="3" height="1" fill="#0000ff"/><rect x="16" y="17" width="1" height="5" fill="#0000ff"/><rect x="19" y="18" width="1" height="3" fill="#0000ff"/><rect x="20" y="17" width="3" height="1" fill="#0000ff"/><rect x="20" y="19" width="2" height="1" fill="#0000ff"/><rect x="20" y="21" width="3" height="1" fill="#0000ff"/><rect x="20" y="17" width="1" height="5" fill="#0000ff"/></g>
<defs>
<radialGradient id="smG" cx="0.42" cy="0.35" r="0.7"><stop offset="0" stop-color="#fff4a0"/><stop offset="0.55" stop-color="#ffd820"/><stop offset="1" stop-color="#f0a800"/></radialGradient>
<linearGradient id="redV" x1="0" x2="1" y1="0" y2="0"><stop offset="0" stop-color="#ff8080"/><stop offset="0.5" stop-color="#e82020"/><stop offset="1" stop-color="#b00000"/></linearGradient>
<linearGradient id="arrG" x1="0" x2="0" y1="0" y2="1"><stop offset="0" stop-color="#9cc8ff"/><stop offset="0.5" stop-color="#2a86f8"/><stop offset="1" stop-color="#1060e0"/></linearGradient>
<radialGradient id="heartG" cx="0.35" cy="0.3" r="0.8"><stop offset="0" stop-color="#ffb0b0"/><stop offset="0.5" stop-color="#ff2020"/><stop offset="1" stop-color="#c00000"/></radialGradient>
<radialGradient id="bulbG" cx="0.4" cy="0.35" r="0.7"><stop offset="0" stop-color="#fffce0"/><stop offset="0.5" stop-color="#ffe040"/><stop offset="1" stop-color="#e0a800"/></radialGradient>
<linearGradient id="skinG" x1="0" x2="1" y1="0" y2="1"><stop offset="0" stop-color="#ffe8cc"/><stop offset="1" stop-color="#f4c090"/></linearGradient>
<radialGradient id="roseG" cx="0.45" cy="0.4" r="0.6"><stop offset="0" stop-color="#ff5030"/><stop offset="0.7" stop-color="#d82010"/><stop offset="1" stop-color="#901008"/></radialGradient>
<radialGradient id="faceG" cx="0.45" cy="0.4" r="0.6"><stop offset="0" stop-color="#ffffff"/><stop offset="1" stop-color="#d8d8d8"/></radialGradient>
</defs>
<symbol id="f_exclam" viewBox="0 0 22 22" overflow="visible"><path d="M7,1.8 Q10.3,-0.4 13.8,1.8 L11.6,14.6 H9 Z" fill="url(#redV)" stroke="#a80000" stroke-width="0.8" stroke-linejoin="round"/><circle cx="10.3" cy="18.8" r="2.4" fill="#e82020" stroke="#a80000" stroke-width="0.8"/></symbol>
<symbol id="f_question" viewBox="0 0 22 22" overflow="visible"><path d="M3.4,6.6 Q3.4,0.8 10,0.8 Q16.6,0.8 16.6,6 Q16.6,9.4 12.6,11 Q11.2,11.7 11.2,14.2 H8.4 Q8,10 11,8.4 Q13,7.4 13,5.8 Q13,3.8 10,3.8 Q7,3.8 7,7 Z" fill="#ec3030" stroke="#b01010" stroke-width="0.7"/><circle cx="9.8" cy="18.6" r="2.3" fill="#ec3030" stroke="#b01010" stroke-width="0.7"/></symbol>
<symbol id="f_check" viewBox="0 0 22 22" overflow="visible"><path d="M0.5,8.4 L4.6,6.6 L7.4,11.2 Q13,5 21.6,2.4 Q12.4,8.8 7,18.8 Z" fill="#22b822" stroke="#0c700c" stroke-width="0.7" stroke-linejoin="round"/></symbol>
<symbol id="f_cross" viewBox="0 0 22 22" overflow="visible"><path d="M4,5 L17.8,18.6 M17.8,4.8 L4,18.6" stroke="#e84010" stroke-width="4.2" stroke-linecap="round"/><path d="M4.6,5.6 L17.2,18 M17.2,5.4 L4.6,18" stroke="#ff7a3a" stroke-width="2" stroke-linecap="round"/><path d="M4.8,5.8 L9,10" stroke="#ffc0a0" stroke-width="1.2" stroke-linecap="round"/></symbol>
<symbol id="f_stop" viewBox="0 0 22 22" overflow="visible"><polygon points="8.2,0.6 15.6,0.6 21,6 21,13.8 15.6,19.2 8.2,19.2 2.4,13.8 2.4,6" fill="#e80808" stroke="#c00000" stroke-width="0.6"/><text x="11.7" y="12.6" font-size="6.4" font-weight="bold" fill="#fff" text-anchor="middle" letter-spacing="0">STOP</text></symbol>
<symbol id="f_smile" viewBox="0 0 22 22" overflow="visible"><circle cx="11" cy="11" r="9.6" fill="url(#smG)" stroke="#e89a10" stroke-width="1"/><ellipse cx="8.2" cy="8.6" rx="1.1" ry="1.7" fill="#1a78e8"/><ellipse cx="13.8" cy="8.6" rx="1.1" ry="1.7" fill="#1a78e8"/><path d="M4.8,11.8 Q11,17.6 17.2,11.8" fill="none" stroke="#b86a10" stroke-width="1.5"/></symbol>
<symbol id="f_sad" viewBox="0 0 22 22" overflow="visible"><circle cx="11" cy="11" r="9.6" fill="url(#smG)" stroke="#e89a10" stroke-width="1"/><ellipse cx="8.2" cy="8.6" rx="1.1" ry="1.7" fill="#1a78e8"/><ellipse cx="13.8" cy="8.6" rx="1.1" ry="1.7" fill="#1a78e8"/><path d="M6,15.2 Q11,10.8 16,15.2" fill="none" stroke="#c06030" stroke-width="1.3"/><path d="M8.5,13.2 Q11,12.2 13.5,13.2" stroke="#e03020" stroke-width="0.8" fill="none"/></symbol>
<symbol id="f_surprised" viewBox="0 0 22 22" overflow="visible"><circle cx="11" cy="11" r="9.6" fill="url(#smG)" stroke="#e89a10" stroke-width="1"/><path d="M5,6 Q7,3.5 9.5,5 M12.5,5 Q15,3.5 17,6" fill="none" stroke="#c07030" stroke-width="1"/><ellipse cx="8.2" cy="9" rx="2" ry="1.8" fill="#6ad0ff"/><ellipse cx="13.8" cy="9" rx="2" ry="1.8" fill="#6ad0ff"/><circle cx="8.2" cy="9" r="0.9" fill="#1060d0"/><circle cx="13.8" cy="9" r="0.9" fill="#1060d0"/><ellipse cx="11" cy="15.2" rx="2.6" ry="3.6" fill="#5a0a08"/><ellipse cx="11" cy="16.6" rx="1.8" ry="1.8" fill="#e83020"/></symbol>
<symbol id="f_clock" viewBox="0 0 22 22" overflow="visible"><circle cx="5" cy="4.6" r="3.4" fill="#c89a6a" stroke="#8a5a30" stroke-width="0.8"/><circle cx="17" cy="4.6" r="3.4" fill="#c89a6a" stroke="#8a5a30" stroke-width="0.8"/><path d="M5,20.5 L7,17 M17,20.5 L15,17" stroke="#9a6a40" stroke-width="2"/><circle cx="11" cy="12" r="8" fill="url(#faceG)" stroke="#a87040" stroke-width="1.6"/><path d="M11,12 V6 M11,12 L9.2,16.4" stroke="#222" stroke-width="0.9"/></symbol>
<symbol id="f_feather" viewBox="0 0 22 22" overflow="visible"><path d="M0.8,21.2 Q3,16 9.5,13.2 Q14,11 15.8,6 Q17,1.6 19.6,1.4 Q22.4,2.2 21.4,8.6 Q19.6,15 12.4,18.2 Q6,20.8 0.8,21.2 Z" fill="#5a8ee8" stroke="#1a3a98" stroke-width="0.8" stroke-linejoin="round"/><path d="M3,19.5 Q11,15.5 17,7 Q18.5,3.5 19.8,3" fill="none" stroke="#a8c8ff" stroke-width="1"/><path d="M4,20.4 Q13,18 19.5,11" fill="none" stroke="#1a2a80" stroke-width="1"/></symbol>
<symbol id="f_bulb" viewBox="0 0 22 22" overflow="visible"><path d="M1,4 L3,5.5 M21,4 L19,5.5 M1,12 L3,11 M21,12 L19,11 M3,18 L4.5,16.5 M19,18 L17.5,16.5" stroke="#f8c020" stroke-width="1"/><circle cx="11" cy="8.2" r="7.4" fill="url(#bulbG)" stroke="#d8a000" stroke-width="0.8"/><path d="M7.6,15 H14.4 V19.5 Q14.4,21.6 11,21.6 Q7.6,21.6 7.6,19.5 Z" fill="#5a6070" stroke="#1a1a22" stroke-width="0.8"/><rect x="9" y="15.4" width="2" height="5.5" fill="#d8dce8"/><path d="M7.8,17.2 H14.2 M7.8,19.2 H14.2" stroke="#1a1a22" stroke-width="0.6"/></symbol>
<symbol id="f_up" viewBox="0 0 22 22" overflow="visible"><path d="M11,4 L21.5,15.5 Q21.5,18 19.5,18 H2.5 Q0.5,18 0.5,15.5 Z" fill="url(#arrG)" stroke="#0c3aa8" stroke-width="1" stroke-linejoin="round"/><path d="M4,12.5 H18" stroke="#cfe4ff" stroke-width="0.8"/></symbol>
<symbol id="f_down" viewBox="0 0 22 22" overflow="visible"><path d="M11,18 L21.5,6.5 Q21.5,4 19.5,4 H2.5 Q0.5,4 0.5,6.5 Z" fill="url(#arrG)" stroke="#0c3aa8" stroke-width="1" stroke-linejoin="round"/><path d="M4,7.5 H18" stroke="#cfe4ff" stroke-width="0.8"/></symbol>
<symbol id="f_upup" viewBox="0 0 22 22" overflow="visible"><path d="M11,0.6 L20.5,10 Q20.5,12 18.5,12 H3.5 Q1.5,12 1.5,10 Z" fill="url(#arrG)" stroke="#0c3aa8" stroke-width="1" stroke-linejoin="round"/><path d="M11,8.6 L20.5,18.5 Q20.5,20.8 18.5,20.8 H3.5 Q1.5,20.8 1.5,18.5 Z" fill="url(#arrG)" stroke="#0c3aa8" stroke-width="1" stroke-linejoin="round"/></symbol>
<symbol id="f_downdown" viewBox="0 0 22 22" overflow="visible"><path d="M11,21.4 L20.5,12 Q20.5,10 18.5,10 H3.5 Q1.5,10 1.5,12 Z" fill="url(#arrG)" stroke="#0c3aa8" stroke-width="1" stroke-linejoin="round"/><path d="M11,13.4 L20.5,3.5 Q20.5,1.2 18.5,1.2 H3.5 Q1.5,1.2 1.5,3.5 Z" fill="url(#arrG)" stroke="#0c3aa8" stroke-width="1" stroke-linejoin="round"/></symbol>
<symbol id="f_thumbup" viewBox="0 0 22 22" overflow="visible"><rect x="0.2" y="11" width="3.4" height="11" fill="#3a3a3a"/><rect x="3.4" y="11.5" width="2.4" height="9.5" fill="#e8e8e8" stroke="#8a8a8a" stroke-width="0.5"/><path d="M5.8,11 Q8,10 10,7 Q12.5,3 14.5,1 Q17,0.5 16.6,3 Q16,6 14.5,9 H19 Q20.5,9.5 20,11 Q20.8,12.5 19.8,14 Q20.4,15.6 19,17 Q19.2,19 17.5,20 H9 Q7,20 5.8,19.5 Z" fill="url(#skinG)" stroke="#b06a30" stroke-width="0.8" stroke-linejoin="round"/><path d="M14,11.5 H19 M14,14 H19 M13.5,17 H18" stroke="#c08050" stroke-width="0.6"/></symbol>
<symbol id="f_thumbdown" viewBox="0 0 22 22" overflow="visible"><rect x="0.2" y="0" width="3.4" height="11" fill="#3a3a3a"/><rect x="3.4" y="1" width="2.4" height="9.5" fill="#e8e8e8" stroke="#8a8a8a" stroke-width="0.5"/><path d="M5.8,1 Q7,0.5 9,0.5 H18 Q20,1.5 20.4,4 Q21,6 20.4,8 Q20.8,10 19.5,12 Q18,13 15,13 Q15.5,16 17,18.5 Q17.6,21.5 15.5,21.6 Q13.5,21 12,17.5 Q10.5,13.5 7.5,11.8 Q6.5,11 5.8,10.8 Z" fill="url(#skinG)" stroke="#b06a30" stroke-width="0.8" stroke-linejoin="round"/><path d="M13,4 H20 M13,7 H20 M13,10 H19.5" stroke="#e0b088" stroke-width="0.5"/></symbol>
<symbol id="f_rose" viewBox="0 0 22 22" overflow="visible"><path d="M10,13.5 L7,21.6" stroke="#a85a28" stroke-width="1.3"/><path d="M11.5,14 L13.5,21" stroke="#6a9a3a" stroke-width="0.9"/><path d="M9,12.5 Q5,11 1.5,12.4 Q5,13.8 9,13.4 Z M13,14.5 Q17,15.5 21,19 Q16.5,18.5 12.6,15.6 Z" fill="#5aa040" stroke="#3a7a2a" stroke-width="0.5"/><path d="M3.2,7.2 Q2.4,3.2 6.2,2 Q8.6,0.4 12.2,1.4 Q16.2,0.6 18.4,3.6 Q21,6.4 19.6,10.2 Q18,14.2 13,15 Q8.2,15.8 5.2,13 Q3.4,10.8 3.2,7.2 Z" fill="url(#roseG)" stroke="#a81008" stroke-width="0.6"/><path d="M6.5,5.5 L9.2,4.2 M11,4.6 L14.4,5.8 M7.6,9 L10.8,7.8 M12.6,9.8 L16,8.2 M9.6,12 L13,11.6 M15.5,4 L17.5,6" stroke="#7a0806" stroke-width="0.9"/></symbol>
<symbol id="f_heart" viewBox="0 0 22 22" overflow="visible"><path d="M11,20.5 Q2,13.5 1.2,8 Q0.6,2.2 6,1.6 Q9.6,1.4 11,5 Q12.4,1.4 16,1.6 Q21.4,2.2 20.8,8 Q20,13.5 11,20.5 Z" fill="url(#heartG)" stroke="#c80000" stroke-width="0.8"/></symbol>
<symbol id="f_gift" viewBox="0 0 22 22" overflow="visible"><rect x="2" y="7" width="17.6" height="14.6" fill="#f4c010" stroke="#c08000" stroke-width="0.8"/><path d="M2,10.5 L19.6,9.5 L19.6,11 L2,12 Z" fill="#e04090"/><rect x="9.4" y="7" width="3" height="14.6" fill="#e04090"/><path d="M10.8,7 Q5,1 3.5,3.5 Q3,6 10.8,7 Q17,1 18.5,3.5 Q19,6 10.8,7 Z" fill="none" stroke="#e04090" stroke-width="1.4"/><rect x="14" y="12" width="5" height="9" fill="#fff080" opacity="0.5"/></symbol>
<symbol id="f_flash" viewBox="0 0 22 22" overflow="visible"><path d="M9,0.6 H16.4 L12.6,7.4 H15.4 L7,21 L9.4,10.6 H6.6 Z" fill="#ffd020" stroke="#d88000" stroke-width="0.8" stroke-linejoin="round"/></symbol>
<symbol id="f_info" viewBox="0 0 22 22" overflow="visible"><circle cx="11" cy="11" r="10.2" fill="url(#blueBall)" stroke="#1a4a98" stroke-width="0.7"/><circle cx="11" cy="5.2" r="1.7" fill="#fff"/><path d="M8.4,8.4 H12.4 V16.4 H13.8 V18 H8.2 V16.4 H9.6 V10 H8.4 Z" fill="#fff"/></symbol>
<symbol id="f_lifebuoy" viewBox="0 0 22 22" overflow="visible"><circle cx="10.5" cy="11.2" r="7.7" fill="none" stroke="#faf6f4" stroke-width="5.3"/><path d="M17.78,13.71 A7.7,7.7 0 0 1 13.01,18.48 M7.99,18.48 A7.7,7.7 0 0 1 3.22,13.71 M3.22,8.69 A7.7,7.7 0 0 1 7.99,3.92 M13.01,3.92 A7.7,7.7 0 0 1 17.78,8.69" stroke="#ee1a1a" stroke-width="5.3" fill="none"/><path d="M3,8 A7.7,7.7 0 0 1 18,8" stroke="#ffffff" stroke-width="2.5" fill="none" opacity="0.35"/><circle cx="10.5" cy="11.2" r="10.35" fill="none" stroke="#8a5050" stroke-width="0.6"/><circle cx="10.5" cy="11.2" r="5.05" fill="none" stroke="#8a5050" stroke-width="0.6"/></symbol>
<rect x="1645.5" y="611.5" width="27" height="27" rx="3" fill="#d6d6d6" stroke="#bcbcbc" stroke-width="1"/>
<use href="#f_exclam" x="1648" y="87" width="22" height="22"/>
<use href="#f_question" x="1648" y="118" width="22" height="22"/>
<use href="#f_check" x="1648" y="149" width="22" height="22"/>
<use href="#f_cross" x="1648" y="180" width="22" height="22"/>
<use href="#f_stop" x="1648" y="211" width="22" height="22"/>
<use href="#f_smile" x="1648" y="242" width="22" height="22"/>
<use href="#f_sad" x="1648" y="273" width="22" height="22"/>
<use href="#f_surprised" x="1648" y="304" width="22" height="22"/>
<use href="#f_clock" x="1648" y="335" width="22" height="22"/>
<use href="#f_feather" x="1648" y="366" width="22" height="22"/>
<use href="#f_bulb" x="1648" y="397" width="22" height="22"/>
<use href="#f_up" x="1648" y="428" width="22" height="22"/>
<use href="#f_down" x="1648" y="459" width="22" height="22"/>
<use href="#f_upup" x="1648" y="490" width="22" height="22"/>
<use href="#f_downdown" x="1648" y="521" width="22" height="22"/>
<use href="#f_thumbup" x="1648" y="552" width="22" height="22"/>
<use href="#f_thumbdown" x="1648" y="583" width="22" height="22"/>
<use href="#f_rose" x="1648" y="614" width="22" height="22"/>
<use href="#f_heart" x="1648" y="645" width="22" height="22"/>
<use href="#f_gift" x="1648" y="676" width="22" height="22"/>
<use href="#f_flash" x="1648" y="707" width="22" height="22"/>
<use href="#f_info" x="1648" y="738" width="22" height="22"/>
<use href="#f_lifebuoy" x="1648" y="769" width="22" height="22"/>
<use href="#f_info" x="786" y="278" width="22" height="22"/>
<use href="#f_thumbup" x="753" y="592" width="22" height="22"/>
<use href="#f_smile" x="600" y="570.5" width="21" height="21"/>
<use href="#f_sad" x="600" y="593.5" width="21" height="21"/>
<use href="#f_surprised" x="600" y="616.5" width="21" height="21"/>
<use href="#f_thumbdown" x="1458" y="510" width="22" height="22"/>
<use href="#f_bulb" x="1458" y="533" width="22" height="22"/>
<use href="#f_smile" x="1458.5" y="556" width="21" height="21"/>
<use href="#f_check" x="1480" y="556" width="22" height="22"/>
<use href="#f_rose" x="1458" y="580" width="22" height="22"/>
</svg>
</body></html>
